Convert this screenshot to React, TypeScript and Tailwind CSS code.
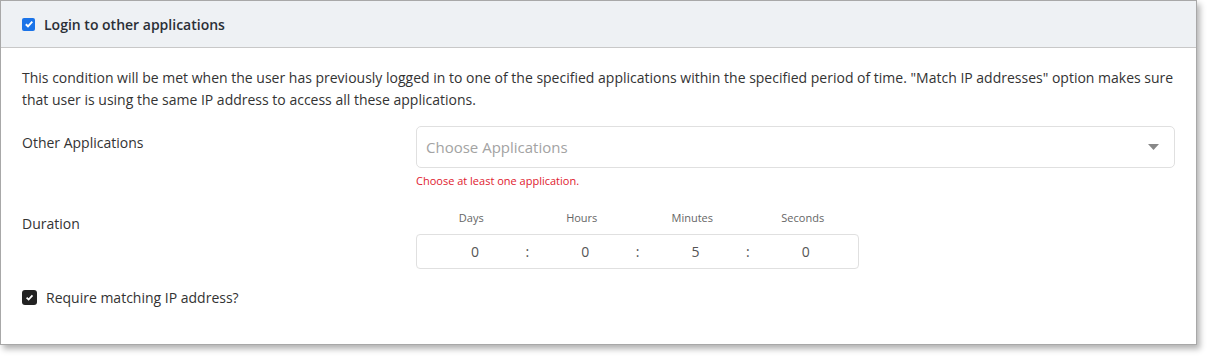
import React from "react";

const DURATION = [
  { label: "Days", value: "0" },
  { label: "Hours", value: "0" },
  { label: "Minutes", value: "5" },
  { label: "Seconds", value: "0" },
];

export default function App() {
  return (
    <div className="w-[1212px] h-[360px] bg-white font-['Open_Sans',sans-serif] text-[#333]">
      <div className="w-[1197px] h-[345px] border border-[#a8a8a8] bg-white shadow-[3px_4px_6px_rgba(0,0,0,0.3)]">
        {/* Header */}
        <div className="h-[47px] bg-[#eef1f4] border-b border-[#c8c8c8] flex items-center pl-[21px] gap-[8px]">
          <span className="w-[13px] h-[13px] rounded-[2px] bg-[#1a73e8] flex items-center justify-center">
            <svg width="10" height="10" viewBox="0 0 10 10">
              <path d="M1.8 5.2 L4 7.3 L8.3 2.6" stroke="#fff" strokeWidth="1.9" fill="none" />
            </svg>
          </span>
          <span className="text-[14px] font-semibold text-[#2b2f36] ml-[1px]">Login to other applications</span>
        </div>

        {/* Body */}
        <div className="px-[21px] pt-[19px]">
          <p className="text-[14px] leading-[22px] text-[#333]">
            This condition will be met when the user has previously logged in to one of the specified applications within the specified period of time. "Match IP addresses" option makes sure that user is using the same IP address to access all these applications.
          </p>

          <div className="flex mt-[15px]">
            <div className="w-[394px] pt-[7px] text-[14px] leading-[20px]">Other Applications</div>
            <div className="flex-1">
              <div className="h-[42px] border border-[#e0e0e0] rounded-[5px] flex items-center justify-between pl-[9px] pr-[15px]">
                <span className="text-[15px] text-[#a3a3a3]">Choose Applications</span>
                <svg width="11" height="6" viewBox="0 0 11 6">
                  <path d="M0 0 H11 L5.5 6 Z" fill="#888" />
                </svg>
              </div>
              <div className="text-[11px] leading-[16px] text-[#e0202e] mt-[5px]">Choose at least one application.</div>
            </div>
          </div>

          <div className="flex mt-[21px]">
            <div className="w-[394px] pt-[4px] text-[14px] leading-[20px]">Duration</div>
            <div>
              <div className="flex w-[442px]">
                {DURATION.map((d) => (
                  <div key={d.label} className="flex-1 text-center text-[11px] leading-[16px] text-[#666]">
                    {d.label}
                  </div>
                ))}
              </div>
              <div className="flex w-[443px] h-[35px] mt-[8px] border border-[#e0e0e0] rounded-[4px] items-center">
                {DURATION.map((d, i) => (
                  <React.Fragment key={d.label}>
                    <div className="flex-1 text-center text-[14px] text-[#555] pl-[6px]">{d.value}</div>
                    {i < DURATION.length - 1 && <span className="text-[14px] text-[#555] w-0 flex justify-center">:</span>}
                  </React.Fragment>
                ))}
              </div>
            </div>
          </div>

          <div className="flex items-center gap-[9px] mt-[18px]">
            <span className="w-[15px] h-[15px] rounded-[3px] bg-[#222] flex items-center justify-center">
              <svg width="9" height="9" viewBox="0 0 10 10">
                <path d="M1.8 5.2 L4 7.3 L8.3 2.6" stroke="#fff" strokeWidth="2" fill="none" />
              </svg>
            </span>
            <span className="text-[14px] text-[#333]">Require matching IP address?</span>
          </div>
        </div>
      </div>
    </div>
  );
}
